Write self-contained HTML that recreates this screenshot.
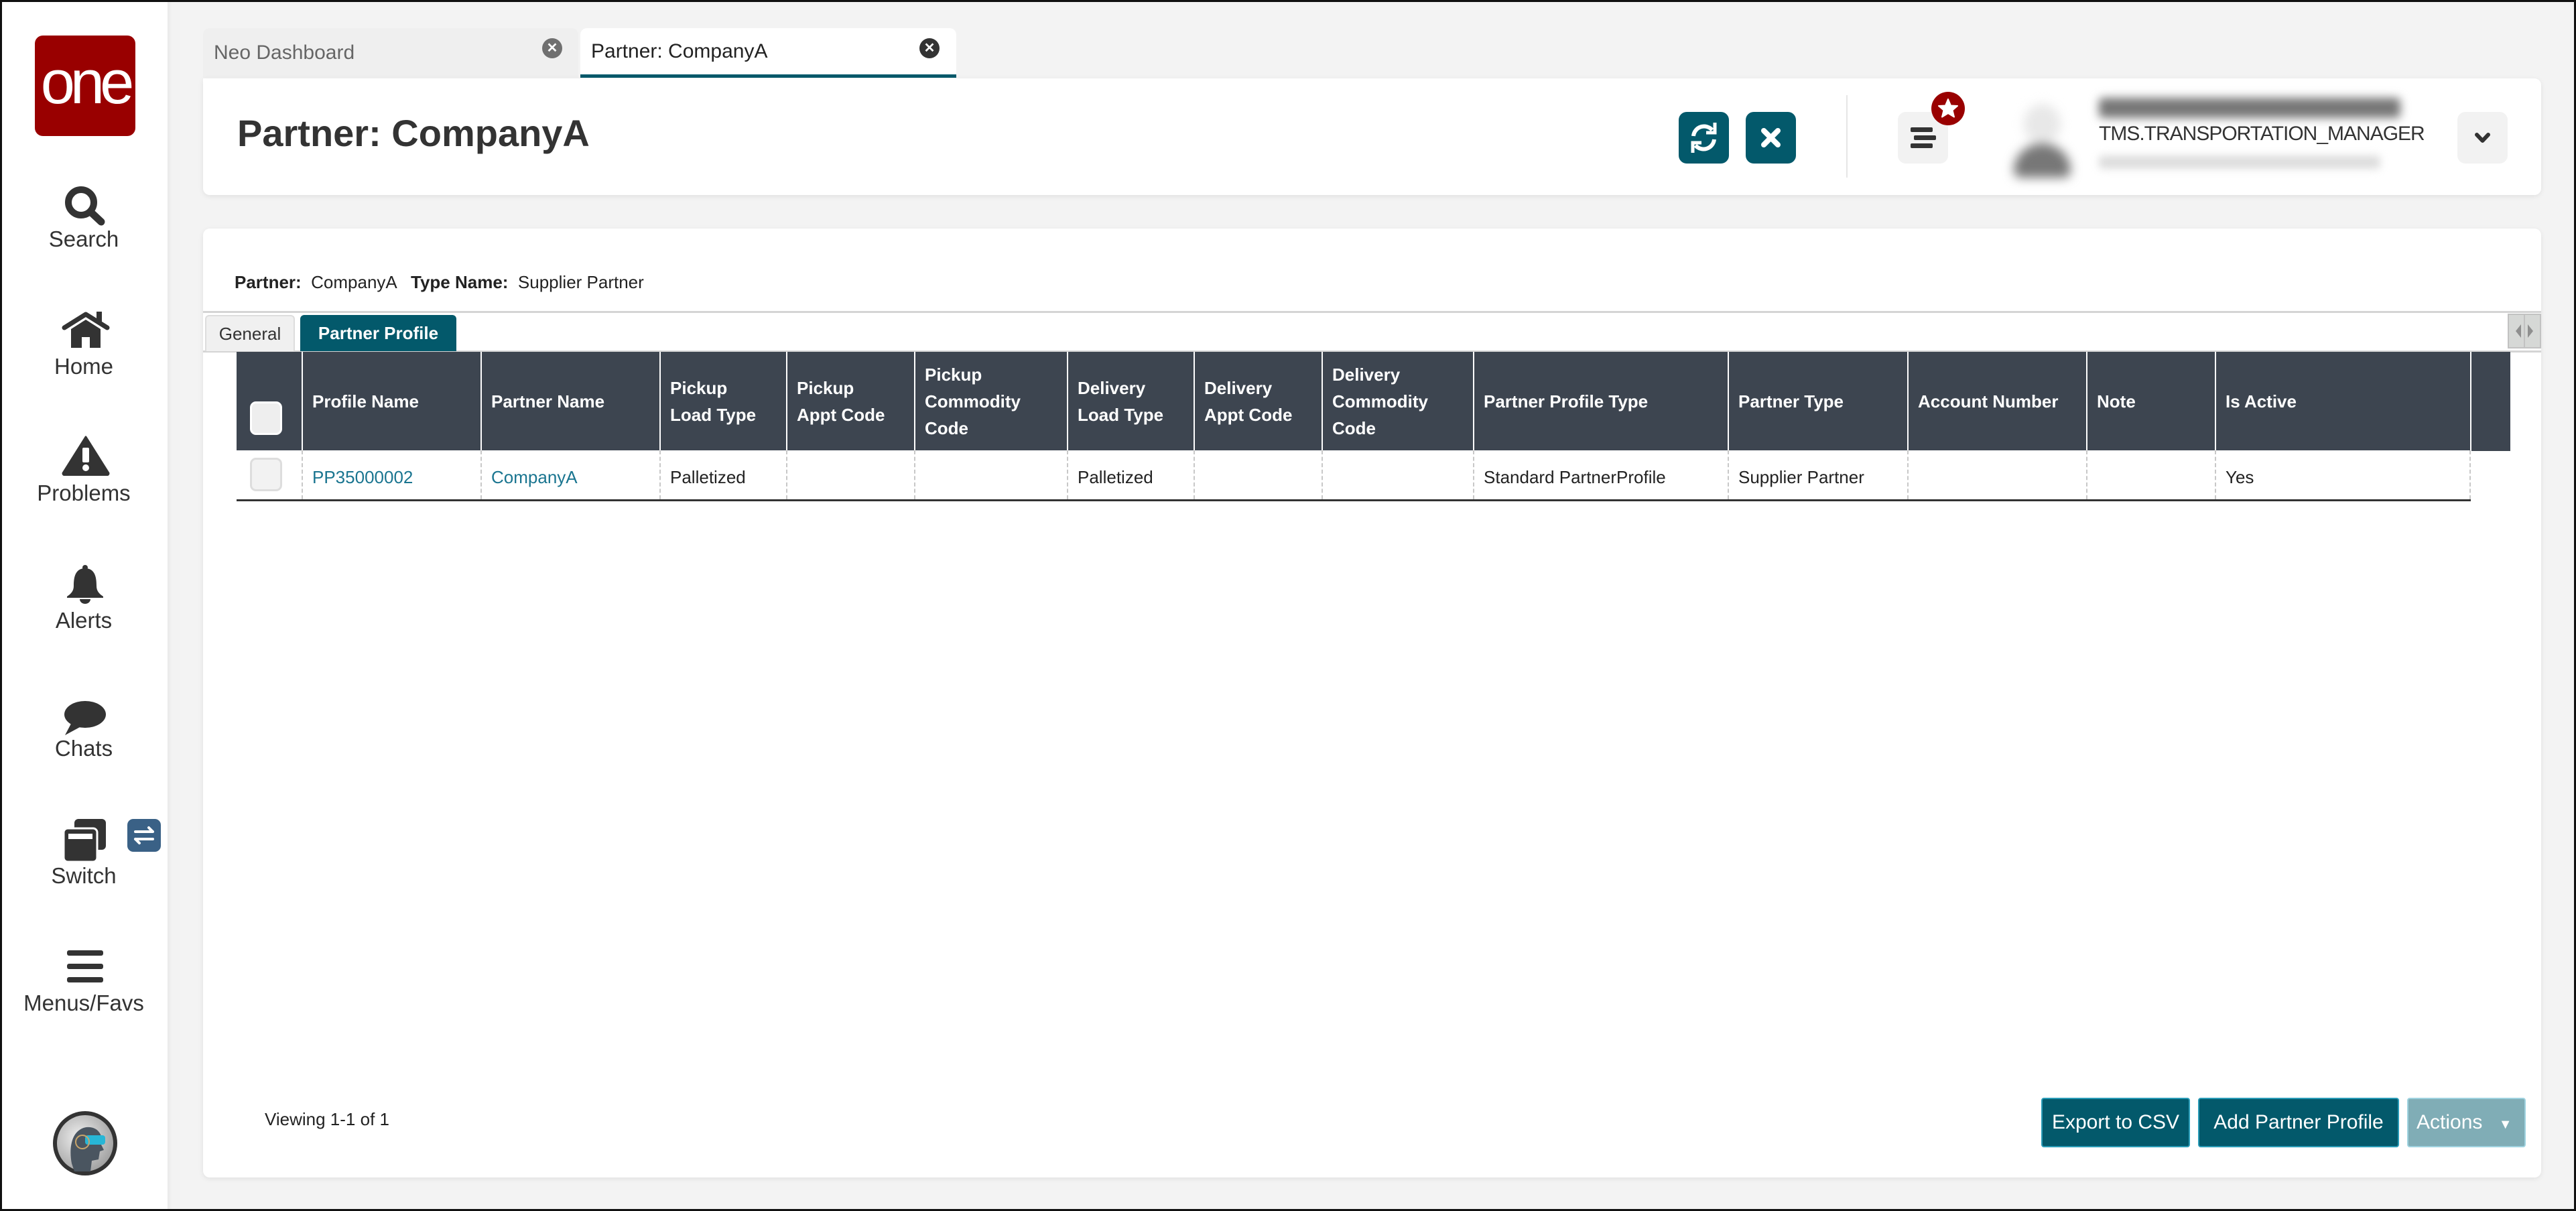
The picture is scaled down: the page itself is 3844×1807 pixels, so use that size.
<!DOCTYPE html>
<html><head><meta charset="utf-8">
<style>
*{margin:0;padding:0;box-sizing:border-box}
html,body{width:3844px;height:1807px;overflow:hidden}
body{background:#f3f3f3;font-family:"Liberation Sans",sans-serif;color:#222;position:relative}
.abs{position:absolute}
.side{left:0;top:0;width:250px;height:1807px;background:#fff;box-shadow:2px 0 6px rgba(0,0,0,.06)}
.lbl{position:absolute;left:0;width:250px;text-align:center;font-size:33px;color:#333}
.ic{position:absolute}
.tab{top:42px;height:74px;border-radius:10px 10px 0 0;font-size:30px;line-height:74px;padding-left:16px}
.card{background:#fff;border-radius:10px;box-shadow:0 2px 8px rgba(0,0,0,.08)}
.btn{border-radius:12px;background:#03596b}
table{border-collapse:collapse;table-layout:fixed}
th{background:#3d4550;color:#fff;font-weight:bold;font-size:26px;line-height:40px;text-align:left;padding:0 14px;border-left:2px solid #fff;height:147px;vertical-align:middle}
td{font-size:26px;height:74px;padding:0 14px;border-left:2px dashed #c8c8c8;vertical-align:middle;padding-top:8px}
th:first-child,td:first-child{border-left:none}
a{color:#1a7590;text-decoration:none}
.cb{width:48px;height:50px;border:3px solid #ddd;border-radius:9px;background:#f2f2f2;margin-left:8px}
.bb{position:absolute;top:1638px;height:74px;color:#fff;font-size:30px;line-height:70px;text-align:center;border:2px solid #2a9cb8;border-radius:4px;background:#03596b}
.frame{position:absolute;left:0;top:0;width:3844px;height:1807px;border:3px solid #111;pointer-events:none;z-index:10}
</style></head><body>

<div class="abs side">
  <div class="abs" style="left:52px;top:53px;width:150px;height:150px;background:#990000;border-radius:12px;color:#fff;font-size:92px;line-height:140px;text-align:center;letter-spacing:-7px;font-family:'Liberation Sans',sans-serif">one</div>

  <svg class="ic" style="left:95px;top:276px" width="64" height="62" viewBox="0 0 64 62"><circle cx="26" cy="26" r="19" fill="none" stroke="#333" stroke-width="10"/><line x1="40" y1="40" x2="56" y2="55" stroke="#333" stroke-width="11" stroke-linecap="round"/></svg>
  <div class="lbl" style="top:338px">Search</div>

  <svg class="ic" style="left:92px;top:463px" width="72" height="58" viewBox="0 0 72 58"><path d="M4 26 L36 6 L68 26" fill="none" stroke="#333" stroke-width="7" stroke-linecap="round" stroke-linejoin="round"/><rect x="52" y="2" width="8" height="16" fill="#333"/><path d="M14 28 L36 14 L58 28 V56 H42 V40 H30 V56 H14 Z" fill="#333"/></svg>
  <div class="lbl" style="top:528px">Home</div>

  <svg class="ic" style="left:92px;top:650px" width="72" height="60" viewBox="0 0 72 60"><path d="M36 2 L70 56 Q70 59 66 59 H6 Q2 59 2 56 Z" fill="#333" stroke="#333" stroke-width="3" stroke-linejoin="round"/><rect x="31" y="18" width="10" height="22" rx="2" fill="#fff"/><circle cx="36" cy="48" r="5" fill="#fff"/></svg>
  <div class="lbl" style="top:717px">Problems</div>

  <svg class="ic" style="left:98px;top:842px" width="58" height="60" viewBox="0 0 58 60"><circle cx="29" cy="5" r="4" fill="#333"/><path d="M29 6 C14 6 12 20 12 32 C12 40 8 44 2 48 V50 H56 V48 C50 44 46 40 46 32 C46 20 44 6 29 6 Z" fill="#333"/><path d="M21 52 A8 7 0 0 0 37 52 Z" fill="#333"/></svg>
  <div class="lbl" style="top:907px">Alerts</div>

  <svg class="ic" style="left:95px;top:1042px" width="64" height="56" viewBox="0 0 64 56"><ellipse cx="32" cy="24" rx="31" ry="20" fill="#333"/><path d="M12 36 L2 55 L26 42 Z" fill="#333"/></svg>
  <div class="lbl" style="top:1098px">Chats</div>

  <svg class="ic" style="left:95px;top:1222px" width="64" height="64" viewBox="0 0 64 64"><rect x="16" y="0" width="47" height="46" rx="6" fill="#333"/><rect x="0" y="14" width="50" height="50" rx="6" fill="#333" stroke="#fff" stroke-width="3"/><rect x="7" y="22" width="36" height="8" fill="#fff"/></svg>
  <div class="abs" style="left:190px;top:1222px;width:50px;height:49px;background:#3a6186;border-radius:9px"><svg width="50" height="49" viewBox="0 0 50 49"><path d="M12 19 H38 M32 13 L38 19 M38 30 H12 M18 36 L12 30" stroke="#fff" stroke-width="4" fill="none" stroke-linecap="round"/></svg></div>
  <div class="lbl" style="top:1288px">Switch</div>

  <svg class="ic" style="left:100px;top:1418px" width="54" height="50" viewBox="0 0 54 50"><rect x="0" y="0" width="54" height="8" rx="3" fill="#333"/><rect x="0" y="20" width="54" height="8" rx="3" fill="#333"/><rect x="0" y="40" width="54" height="8" rx="3" fill="#333"/></svg>
  <div class="lbl" style="top:1478px">Menus/Favs</div>

  <svg class="ic" style="left:77px;top:1656px" width="100" height="100" viewBox="0 0 100 100"><defs><radialGradient id="g" cx=".4" cy=".4" r=".7"><stop offset="0" stop-color="#f0f0f0"/><stop offset="1" stop-color="#9a9a9a"/></radialGradient></defs><circle cx="50" cy="50" r="48" fill="#333"/><circle cx="50" cy="50" r="42" fill="url(#g)"/><path d="M30 80 C26 60 28 30 52 26 C70 24 78 40 74 52 L78 60 L72 62 L70 74 L60 76 L58 92 L34 92 Z" fill="#4a5560"/><rect x="50" y="38" width="30" height="14" rx="4" fill="#27b6d6"/><circle cx="46" cy="48" r="10" fill="none" stroke="#c9a56a" stroke-width="2"/></svg>
</div>

<div class="abs tab" style="left:303px;width:560px;background:#efefef;color:#666">Neo Dashboard
  <div class="abs" style="left:506px;top:15px;width:30px;height:30px;border-radius:50%;background:#707070;color:#fff;font-size:20px;line-height:30px;text-align:center;font-weight:bold">✕</div></div>
<div class="abs tab" style="left:866px;width:561px;background:#fff;color:#222;border-bottom:5px solid #03596b;line-height:70px">Partner: CompanyA
  <div class="abs" style="left:506px;top:15px;width:30px;height:30px;border-radius:50%;background:#333;color:#fff;font-size:20px;line-height:30px;text-align:center;font-weight:bold">✕</div></div>

<div class="abs card" style="left:303px;top:117px;width:3489px;height:174px;border-radius:0 10px 10px 10px"></div>
<div class="abs" style="left:354px;top:166px;font-size:56px;font-weight:bold;color:#333">Partner: CompanyA</div>
<div class="abs btn" style="left:2505px;top:167px;width:75px;height:77px"><svg width="75" height="77" viewBox="0 0 75 77"><path d="M22 36 A16 16 0 0 1 50 27 M53 41 A16 16 0 0 1 25 50" fill="none" stroke="#fff" stroke-width="6"/><path d="M54 16 V31 H41" fill="none" stroke="#fff" stroke-width="5"/><path d="M21 61 V46 H34" fill="none" stroke="#fff" stroke-width="5"/></svg></div>
<div class="abs btn" style="left:2605px;top:167px;width:75px;height:77px"><svg width="75" height="77" viewBox="0 0 75 77"><path d="M27 28 L48 49 M48 28 L27 49" stroke="#fff" stroke-width="8" stroke-linecap="round"/></svg></div>
<div class="abs" style="left:2755px;top:142px;width:2px;height:123px;background:#e6e6e6"></div>
<div class="abs" style="left:2832px;top:167px;width:75px;height:77px;background:#f2f2f2;border-radius:12px"><svg width="75" height="77" viewBox="0 0 75 77"><rect x="19" y="23" width="33" height="7" rx="2" fill="#333"/><rect x="24" y="35" width="33" height="7" rx="2" fill="#333"/><rect x="19" y="47" width="33" height="7" rx="2" fill="#333"/></svg></div>
<div class="abs" style="left:2882px;top:137px;width:50px;height:50px;border-radius:50%;background:#990000"><svg width="50" height="50" viewBox="0 0 50 50"><path d="M25 11 L29 20.5 L39 21 L31.5 27.5 L34 37.5 L25 32 L16 37.5 L18.5 27.5 L11 21 L21 20.5 Z" fill="#fff" stroke="#fff" stroke-width="2" stroke-linejoin="round"/></svg></div>
<div class="abs" style="left:2995px;top:145px;width:105px;height:125px;filter:blur(8px)"><div style="position:absolute;left:25px;top:10px;width:55px;height:60px;border-radius:50%;background:#e8e8e8"></div><div style="position:absolute;left:10px;top:70px;width:85px;height:50px;border-radius:40px 40px 10px 10px;background:#777"></div></div>
<div class="abs" style="left:3132px;top:146px;width:450px;height:30px;background:#777;filter:blur(7px);border-radius:6px"></div>
<div class="abs" style="left:3132px;top:183px;font-size:30px;color:#333;letter-spacing:-1px">TMS.TRANSPORTATION_MANAGER</div>
<div class="abs" style="left:3132px;top:232px;width:420px;height:20px;background:#ddd;filter:blur(6px);border-radius:6px"></div>
<div class="abs" style="left:3667px;top:167px;width:75px;height:77px;background:#f2f2f2;border-radius:12px"><svg width="75" height="77" viewBox="0 0 75 77"><path d="M29 34 L37.5 43 L46 34" fill="none" stroke="#333" stroke-width="6" stroke-linecap="round" stroke-linejoin="round"/></svg></div>

<div class="abs card" style="left:303px;top:341px;width:3489px;height:1416px"></div>
<div class="abs" style="left:350px;top:406px;font-size:26px;color:#222"><b>Partner:</b>&nbsp; CompanyA &nbsp;&nbsp;<b>Type Name:</b>&nbsp; Supplier Partner</div>
<div class="abs" style="left:303px;top:464px;width:3489px;height:3px;background:#d4d4d4"></div>
<div class="abs" style="left:303px;top:523px;width:3489px;height:3px;background:#d4d4d4"></div>
<div class="abs" style="left:306px;top:470px;width:134px;height:54px;background:#f0f0f0;border:2px solid #ddd;border-bottom:none;border-radius:6px 6px 0 0;font-size:26px;line-height:52px;text-align:center;color:#333">General</div>
<div class="abs" style="left:448px;top:470px;width:233px;height:54px;background:#03596b;border-radius:6px 6px 0 0;font-size:26px;line-height:54px;text-align:center;color:#fff;font-weight:bold">Partner Profile</div>
<div class="abs" style="left:3742px;top:468px;width:50px;height:52px;background:#d6d8d6;border:2px solid #c2c2c2"><svg width="46" height="48" viewBox="0 0 46 48"><path d="M18 14 L10 24 L18 34 Z M28 14 L36 24 L28 34 Z" fill="#8f8f8f"/><line x1="23" y1="0" x2="23" y2="48" stroke="#c2c2c2" stroke-width="2"/></svg></div>

<div class="abs" style="left:3686px;top:525px;width:60px;height:148px;background:#3d4550;border-left:2px solid #fff"></div>
<table class="abs" style="left:353px;top:525px;width:3333px">
<colgroup><col style="width:98px"><col style="width:267px"><col style="width:267px"><col style="width:189px"><col style="width:191px"><col style="width:228px"><col style="width:189px"><col style="width:191px"><col style="width:226px"><col style="width:380px"><col style="width:268px"><col style="width:267px"><col style="width:192px"><col style="width:380px"></colgroup>
<tr><th style="padding:0"><div class="cb" style="margin-left:20px;margin-top:50px;border-color:#fff;background:#eee"></div></th><th>Profile Name</th><th>Partner Name</th><th>Pickup<br>Load Type</th><th>Pickup<br>Appt Code</th><th>Pickup<br>Commodity<br>Code</th><th>Delivery<br>Load Type</th><th>Delivery<br>Appt Code</th><th>Delivery<br>Commodity<br>Code</th><th>Partner Profile Type</th><th>Partner Type</th><th>Account Number</th><th>Note</th><th>Is Active</th></tr>
<tr style="border-bottom:3px solid #333"><td style="padding:0"><div class="cb" style="margin-left:20px"></div></td><td><a>PP35000002</a></td><td><a>CompanyA</a></td><td>Palletized</td><td></td><td></td><td>Palletized</td><td></td><td></td><td>Standard PartnerProfile</td><td>Supplier Partner</td><td></td><td></td><td style="border-right:2px dashed #c8c8c8">Yes</td></tr>
</table>

<div class="abs" style="left:395px;top:1655px;font-size:26px;color:#222">Viewing 1-1 of 1</div>
<div class="bb" style="left:3046px;width:222px">Export to CSV</div>
<div class="bb" style="left:3280px;width:300px">Add Partner Profile</div>
<div class="bb" style="left:3592px;width:177px;background:#80adb6;border-color:#9fd3e0;text-align:left;padding-left:12px">Actions <span style="font-size:20px;margin-left:16px">▼</span></div>
<div class="frame"></div>
</body></html>
